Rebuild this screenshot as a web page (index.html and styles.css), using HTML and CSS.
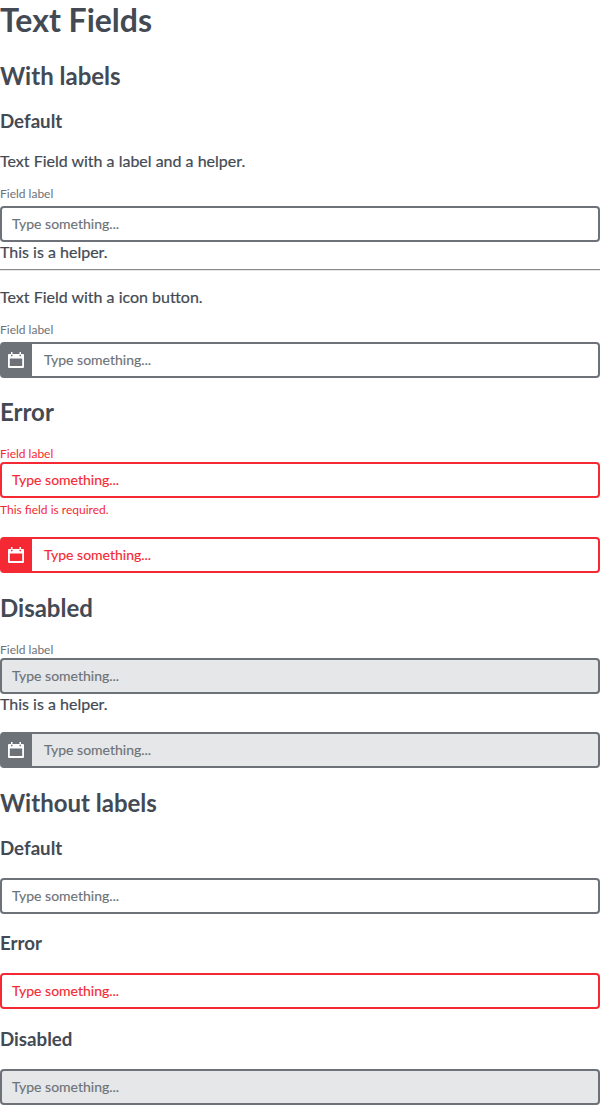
FILE: index.html
```html
<!DOCTYPE html>
<html lang="en">
<head>
<meta charset="utf-8">
<title>Text Fields</title>
<link rel="stylesheet" href="styles.css">
</head>
<body>
<h1>Text Fields</h1>
<h2>With labels</h2>
<h3>Default</h3>
<p>Text Field with a label and a helper.</p>
<div class="field spaced">
  <div class="label">Field label</div>
  <div class="box"><span class="text">Type something...</span></div>
  <div class="helper">This is a helper.</div>
</div>
<hr>
<p>Text Field with a icon button.</p>
<div class="field spaced">
  <div class="label">Field label</div>
  <div class="box"><span class="icon"><svg viewBox="0 0 16 16"><path fill-rule="evenodd" d="M3 0h1.500v2h7V0H13v2h2a1 1 0 0 1 1 1v12a1 1 0 0 1-1 1H1a1 1 0 0 1-1-1V3a1 1 0 0 1 1-1h2zM3 2.800v1.400h1.500V2.800zM11.500 2.800v1.400H13V2.800zM1.800 6.500V14h12.400V6.500z"/></svg></span><span class="text">Type something...</span></div>
</div>
<h2>Error</h2>
<div class="field error">
  <div class="label">Field label</div>
  <div class="box"><span class="text">Type something...</span></div>
  <div class="message">This field is required.</div>
</div>
<div class="field error after-message">
  <div class="box"><span class="icon"><svg viewBox="0 0 16 16"><path fill-rule="evenodd" d="M3 0h1.500v2h7V0H13v2h2a1 1 0 0 1 1 1v12a1 1 0 0 1-1 1H1a1 1 0 0 1-1-1V3a1 1 0 0 1 1-1h2zM3 2.800v1.400h1.500V2.800zM11.500 2.800v1.400H13V2.800zM1.800 6.500V14h12.400V6.500z"/></svg></span><span class="text">Type something...</span></div>
</div>
<h2>Disabled</h2>
<div class="field disabled">
  <div class="label">Field label</div>
  <div class="box"><span class="text">Type something...</span></div>
  <div class="helper">This is a helper.</div>
</div>
<div class="field disabled after-helper">
  <div class="box"><span class="icon"><svg viewBox="0 0 16 16"><path fill-rule="evenodd" d="M3 0h1.500v2h7V0H13v2h2a1 1 0 0 1 1 1v12a1 1 0 0 1-1 1H1a1 1 0 0 1-1-1V3a1 1 0 0 1 1-1h2zM3 2.800v1.400h1.500V2.800zM11.500 2.800v1.400H13V2.800zM1.800 6.500V14h12.400V6.500z"/></svg></span><span class="text">Type something...</span></div>
</div>
<h2>Without labels</h2>
<h3>Default</h3>
<div class="field"><div class="box"><span class="text">Type something...</span></div></div>
<h3>Error</h3>
<div class="field error"><div class="box"><span class="text">Type something...</span></div></div>
<h3>Disabled</h3>
<div class="field disabled"><div class="box"><span class="text">Type something...</span></div></div>
</body>
</html>
```
FILE: styles.css
```css
* { box-sizing: border-box; }
body { margin: 0; font: 16px/20px Lato, sans-serif; color: #434a54; background: #fff; }
h1, h2, h3 { font-weight: 700; }
h1 { margin: 0 0 21.4px; font-size: 32px; line-height: 40px; }
h2 { margin: 19.92px 0 19.7px; font-size: 24px; line-height: 29.3px; }
h3 { margin: 18.72px 0; font-size: 18.72px; line-height: 22px; }
p { margin: 16px 0 15px; -webkit-text-stroke: 0.2px; }
.label { padding-bottom: 1px; font-size: 12px; line-height: 15px; color: #6d7278; }
.spaced .label { margin-bottom: 4px; }
.spaced + h2 { margin-top: 19px; }
.box { display: flex; align-items: center; height: 36px; border: 2px solid #6d7278; border-radius: 4px; }
.text { padding-left: 10px; font-size: 14px; line-height: 20px; color: #6d7278; -webkit-text-stroke: 0.15px; }
.helper { line-height: 19px; -webkit-text-stroke: 0.2px; }
.icon { display: flex; align-items: center; width: 30px; height: 32px; padding-left: 6px; background: #6d7278; }
.icon + .text { padding-left: 12px; }
.icon svg { width: 16px; height: 16px; fill: #fff; }
hr { margin: 8px 0 16px; border: 0; border-top: 1px solid #888; border-bottom: 1px solid #e8e8e8; }
.after-message { margin-top: 20.3px; }
.after-helper { margin-top: 18.8px; }
.error .label, .error .text, .message { color: #f52933; }
.error .box { border-color: #f52933; }
.error .icon { background: #f52933; }
.message { font-size: 12px; line-height: 15px; margin-top: 4px; }
.disabled .box { background: #e5e7e9; }
```
